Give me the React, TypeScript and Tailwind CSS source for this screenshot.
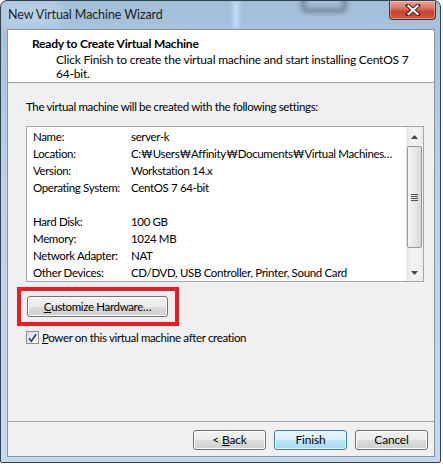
import React from 'react';

const rows = [
  { label: 'Name:', value: 'server-k' },
  { label: 'Location:', value: 'C:₩Users₩Affinity₩Documents₩Virtual Machines…' },
  { label: 'Version:', value: 'Workstation 14.x' },
  { label: 'Operating System:', value: 'CentOS 7 64-bit' },
  { label: '', value: '' },
  { label: 'Hard Disk:', value: '100 GB' },
  { label: 'Memory:', value: '1024 MB' },
  { label: 'Network Adapter:', value: 'NAT' },
  { label: 'Other Devices:', value: 'CD/DVD, USB Controller, Printer, Sound Card' },
];

const btn =
  'h-[20px] w-[73px] rounded-[3px] border text-[12px] leading-none text-black flex items-center justify-center';
const grayBtn =
  'border-[#707070] bg-[linear-gradient(to_bottom,#f2f2f2_0%,#ebebeb_50%,#dddddd_50%,#cfcfcf_100%)] shadow-[inset_0_0_0_1px_#fcfcfc]';

function CloseButton() {
  return (
    <div className="w-[47px] h-[19px] rounded-b-[4px] border border-t-0 border-[#5d2a22] bg-[linear-gradient(to_bottom,#e8a597_0%,#d77462_40%,#c8422c_60%,#d15a45_100%)] shadow-[inset_0_0_0_1px_rgba(255,255,255,0.35)] flex items-center justify-center">
      <svg width="16" height="12" viewBox="0 0 16 12">
        <path d="M3 1.5 L13 10.5 M13 1.5 L3 10.5" stroke="#4a1a12" strokeWidth="4" strokeLinecap="square" />
        <path d="M3.5 2 L12.5 10 M12.5 2 L3.5 10" stroke="#ffffff" strokeWidth="2.2" strokeLinecap="square" />
      </svg>
    </div>
  );
}

function Scrollbar() {
  return (
    <div className="w-[17px] h-full bg-[linear-gradient(to_right,#e6e6e6,#f2f2f2_40%,#eeeeee)] flex flex-col items-center">
      <div className="h-[19px] w-full flex items-center justify-center">
        <svg width="7" height="4" viewBox="0 0 7 4"><path d="M0 4 L3.5 0 L7 4 Z" fill="#444" /></svg>
      </div>
      <div className="w-[15px] h-[102px] rounded-[2px] border border-[#979797] bg-[linear-gradient(to_right,#f4f4f4,#e9e9e9_50%,#d8d8d8)] flex flex-col items-center justify-center gap-[1px]">
        <div className="w-[7px] h-[1px] bg-[#555]" />
        <div className="w-[7px] h-[1px] bg-[#555]" />
        <div className="w-[7px] h-[1px] bg-[#555]" />
        <div className="w-[7px] h-[1px] bg-[#555]" />
      </div>
      <div className="flex-1" />
      <div className="h-[17px] w-full flex items-center justify-center">
        <svg width="7" height="4" viewBox="0 0 7 4"><path d="M0 0 L7 0 L3.5 4 Z" fill="#444" /></svg>
      </div>
    </div>
  );
}

export default function App() {
  return (
    <div className="w-[443px] h-[466px] bg-white overflow-hidden font-['Lato',sans-serif] text-black tracking-[-0.2px]">
      <div className="relative w-[441px] h-[463px] rounded-t-[7px] rounded-b-[2px] border border-[#33404e] bg-[linear-gradient(to_bottom,#a3bed8_0%,#a9c4de_10%,#b9d2ea_40%,#c2d9f0_100%)] flex flex-col overflow-hidden">
        {/* blurred desktop behind the glass */}
        <div className="absolute left-[300px] top-[-14px] w-[46px] h-[26px] rounded-[6px] border-[5px] border-[#5b6672] opacity-60 blur-[2px]" />
        <div className="absolute left-[232px] top-0 w-[6px] h-[28px] bg-[#c4ddf5] blur-[2px]" />
        <div className="absolute left-0 top-0 w-[60px] h-[28px] bg-[#c6dbef] opacity-60 blur-[6px]" />

        <div className="relative h-[28px] flex items-start justify-between">
          <div className="pl-[7px] pt-[6px] text-[12.5px] leading-[16px] tracking-[-0.1px] text-[#1e1e1e]">New Virtual Machine Wizard</div>
          <div className="mr-[4px]">
            <CloseButton />
          </div>
        </div>

        <div className="relative ml-[6px] mr-[5px] mb-[5px] flex-1 border border-[#8196ab] bg-[#f0f0f0] flex flex-col">
          <div className="h-[53px] bg-white border-b border-[#a0a0a0] pt-[6px] pl-[24px]">
            <div className="text-[12px] leading-[15px] font-bold">Ready to Create Virtual Machine</div>
            <div className="pl-[24px] text-[12px] leading-[14px] mt-[2px]">
              Click Finish to create the virtual machine and start installing CentOS 7
              <br />
              64-bit.
            </div>
          </div>

          <div className="flex-1 pt-[16px] pl-[9px] border-b border-[#a0a0a0] text-[11.5px] tracking-[-0.35px]">
            <div className="ml-[9px] leading-[15px]">
              The virtual machine will be created with the following settings:
            </div>

            <div className="ml-[9px] mt-[12px] w-[398px] h-[156px] border border-[#a5a5a5] bg-white flex">
              <div className="flex-1 pt-[1px] pl-[6px]">
                {rows.map((r, i) => (
                  <div key={i} className="h-[17px] flex items-center leading-[17px] whitespace-nowrap">
                    <span className="w-[98px] shrink-0">{r.label}</span>
                    <span>{r.value}</span>
                  </div>
                ))}
              </div>
              <Scrollbar />
            </div>

            <div className="mt-[5px] w-[162px] border-4 border-[#ec1c24] pt-[5px] pb-[5px] pl-[6px]">
              <button className={`${btn} ${grayBtn} !w-[141px] !h-[21px] !text-[11.5px]`}>
                <span className="underline">C</span>ustomize Hardware…
              </button>
            </div>

            <div className="ml-[9px] mt-[4px] flex items-center gap-[3px]">
              <div className="w-[13px] h-[13px] border border-[#8e8f8f] bg-[linear-gradient(135deg,#dcdcdc,#fbfbfb)] p-[1px] flex items-center justify-center">
                <svg width="10" height="10" viewBox="0 0 10 10">
                  <path d="M1 5.2 L3.8 8.6 L9 0.8" fill="none" stroke="#1b3a8c" strokeWidth="1.8" />
                </svg>
              </div>
              <div className="leading-[15px]">
                <span className="underline">P</span>ower on this virtual machine after creation
              </div>
            </div>
          </div>

          <div className="h-[34px] flex justify-end items-start pt-[8px] pr-[6px] gap-[8px]">
            <button className={`${btn} ${grayBtn}`}>
              &lt; <span className="underline ml-[3px]">B</span>ack
            </button>
            <button
              className={`${btn} border-[#3c7fb1] bg-[linear-gradient(to_bottom,#eaf6fd_0%,#d9f0fc_50%,#bee6fd_50%,#a7d9f5_100%)] shadow-[inset_0_0_0_1px_#e8f6fd]`}
            >
              Finish
            </button>
            <button className={`${btn} ${grayBtn}`}>Cancel</button>
          </div>
        </div>
      </div>
    </div>
  );
}
